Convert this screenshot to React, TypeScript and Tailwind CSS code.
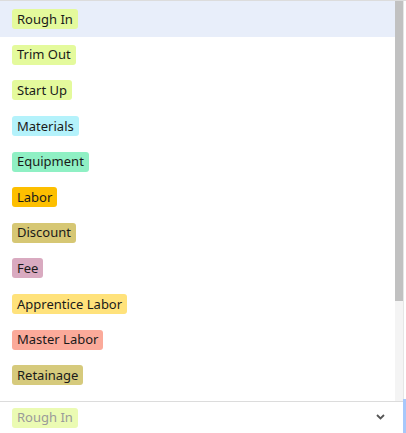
import React from "react";

type Option = { label: string; color: string };

const options: Option[] = [
  { label: "Rough In", color: "bg-[#e4fa9c]" },
  { label: "Trim Out", color: "bg-[#e4fa9c]" },
  { label: "Start Up", color: "bg-[#e4fa9c]" },
  { label: "Materials", color: "bg-[#b4f2fb]" },
  { label: "Equipment", color: "bg-[#8ff0c4]" },
  { label: "Labor", color: "bg-[#fdbf00]" },
  { label: "Discount", color: "bg-[#d6c774]" },
  { label: "Fee", color: "bg-[#d9aac0]" },
  { label: "Apprentice Labor", color: "bg-[#ffe27b]" },
  { label: "Master Labor", color: "bg-[#fbaa9a]" },
  { label: "Retainage", color: "bg-[#d6ca7c]" },
];

function Chip({ label, color, faded }: { label: string; color: string; faded?: boolean }) {
  return (
    <span
      className={`inline-flex h-[20px] items-center rounded-[3px] px-[5px] text-[13px] leading-none ${color} ${
        faded ? "text-[#9a9a9a]" : "text-[#1a1a1a]"
      }`}
    >
      {label}
    </span>
  );
}

export default function App() {
  return (
    <div
      className="flex h-[433px] w-[406px] flex-col overflow-hidden bg-white"
      style={{ fontFamily: '"Noto Sans", "Open Sans", sans-serif' }}
    >
      {/* dropdown list with its scrollbar */}
      <div className="flex h-[401px] border-t border-[#dcdcdc]">
        <ul className="flex flex-1 flex-col">
          {options.map((o, i) => (
            <li
              key={o.label}
              className={`flex h-[35.6px] items-center pl-[12px] pt-[1px] ${i === 0 ? "bg-[#e8eefa]" : ""}`}
            >
              <Chip label={o.label} color={o.color} />
            </li>
          ))}
        </ul>
        <div className="flex w-[8px] flex-col bg-[#f4f4f4]">
          <div className="h-[300px] bg-[#c1c1c1]" />
        </div>
        <div className="w-[3px] border-l border-[#e6e6e6] bg-white" />
      </div>

      {/* select field */}
      <div className="flex flex-1 border-t border-[#dcdcdc]">
        <div className="flex flex-1 items-center justify-between pl-[12px] pr-[18px]">
          <Chip label="Rough In" color="bg-[#ebfbb3]" faded />
          <svg width="9" height="6" viewBox="0 0 9 6" className="mb-[2px]">
            <path d="M1 1 L4.5 4.5 L8 1" fill="none" stroke="#555" strokeWidth="1.8" />
          </svg>
        </div>
        <div className="mt-[-3px] w-[3px] bg-[#a7c8fb]" />
      </div>
    </div>
  );
}
